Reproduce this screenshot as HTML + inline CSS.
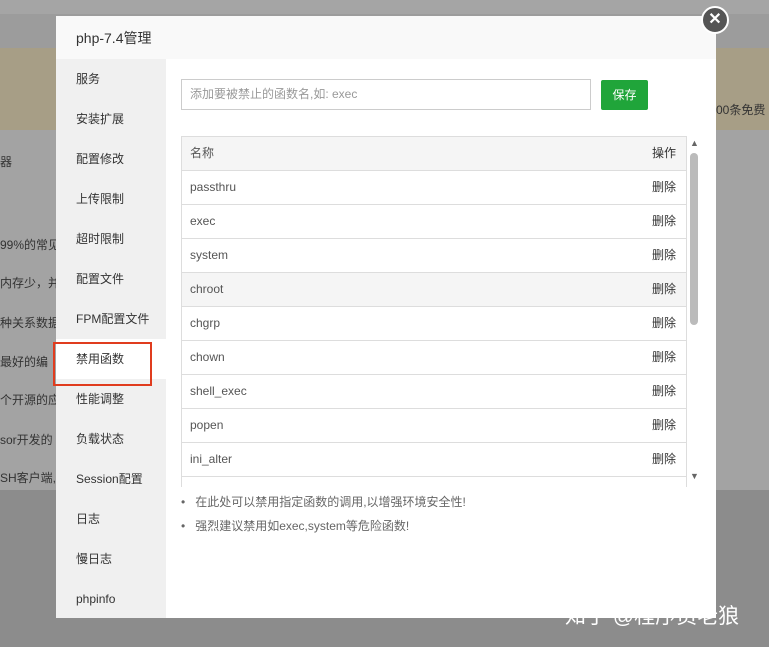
<!DOCTYPE html><html><head><meta charset="utf-8"><style>
body{margin:0;width:769px;height:647px;position:relative;overflow:hidden;font-family:"Liberation Sans","Noto Sans CJK SC",sans-serif;background:#9c9c9c}
.a{position:absolute}
.bg{color:#333;font-size:12px}
.m{left:56px;top:16px;width:660px;height:602px;background:#fff}
.hd{left:0;top:0;width:660px;height:43px;background:#f9f9f9;font-size:14px;color:#333;line-height:45px;padding-left:20px;box-sizing:border-box}
.sb{left:0;top:43px;width:110px;height:559px;background:#f0f0f0}
.sb div{height:40px;line-height:40px;padding-left:20px;font-size:12px;color:#333}
.t{left:125px;top:120px;width:504px;border:1px solid #ddd;border-bottom:none;font-size:12px;color:#555}
.t div{height:33px;line-height:33px;border-bottom:1px solid #ddd;padding:0 8px;position:relative}
.t span{position:absolute;right:10px;color:#333}
</style></head><body>
<div class="a" style="left:0;top:0;width:769px;height:14px;background:#a5a5a5"></div>
<div class="a" style="left:0;top:48px;width:769px;height:82px;background:#a79e86"></div>
<div class="a" style="left:0;top:130px;width:769px;height:360px;background:#a3a3a3"></div>
<div class="a" style="left:0;top:490px;width:769px;height:157px;background:#8c8c8c"></div>
<div class="a bg" style="left:0;top:153px">器</div>
<div class="a bg" style="left:0;top:236px">99%的常见</div>
<div class="a bg" style="left:0;top:274px">内存少，并</div>
<div class="a bg" style="left:0;top:314px">种关系数据</div>
<div class="a bg" style="left:0;top:353px">最好的编</div>
<div class="a bg" style="left:0;top:391px">个开源的应</div>
<div class="a bg" style="left:0;top:431px">sor开发的</div>
<div class="a bg" style="left:0;top:469px">SH客户端,</div>
<div class="a bg" style="left:716px;top:101px">00条免费</div>
<div class="a m">
<div class="a hd">php-7.4管理</div>
<div class="a sb">
<div>服务</div><div>安装扩展</div><div>配置修改</div><div>上传限制</div><div>超时限制</div><div>配置文件</div><div>FPM配置文件</div><div style="background:#fff">禁用函数</div><div>性能调整</div><div>负载状态</div><div>Session配置</div><div>日志</div><div>慢日志</div><div>phpinfo</div>
</div>
<div class="a" style="left:-3px;top:326px;width:99px;height:44px;border:2px solid #e03c1e;box-sizing:border-box"></div>
<div class="a" style="left:125px;top:63px;width:410px;height:31px;border:1px solid #ccc;box-sizing:border-box;font-size:12px;color:#999;line-height:29px;padding-left:8px">添加要被禁止的函数名,如: exec</div>
<div class="a" style="left:545px;top:64px;width:47px;height:30px;background:#20a53a;border-radius:2px;color:#fff;font-size:12px;line-height:30px;text-align:center">保存</div>
<div class="a t">
<div style="background:#f5f5f5">名称<span>操作</span></div>
<div>passthru<span>删除</span></div><div>exec<span>删除</span></div><div>system<span>删除</span></div><div style="background:#f5f5f5">chroot<span>删除</span></div><div>chgrp<span>删除</span></div><div>chown<span>删除</span></div><div>shell_exec<span>删除</span></div><div>popen<span>删除</span></div><div>ini_alter<span>删除</span></div><div style="height:10px;border:none"></div>
</div>
<div class="a" style="left:634px;top:122px;font-size:9px;color:#666">▲</div>
<div class="a" style="left:634px;top:137px;width:8px;height:172px;background:#bbb;border-radius:4px"></div>
<div class="a" style="left:634px;top:455px;font-size:9px;color:#666">▼</div>
<div class="a" style="left:125px;top:474px;font-size:12px;color:#666;line-height:24px">• &nbsp; 在此处可以禁用指定函数的调用,以增强环境安全性!<br>• &nbsp; 强烈建议禁用如exec,system等危险函数!</div>
</div>
<div class="a" style="left:701px;top:6px;width:24px;height:24px;border-radius:50%;background:#555;border:2px solid #fff;color:#fff;text-align:center;line-height:24px;font-size:16px;font-weight:bold">✕</div>
<div class="a" style="left:565px;top:600px;font-size:21px;color:#fff">知乎 @程序员老狼</div>
</body></html>
